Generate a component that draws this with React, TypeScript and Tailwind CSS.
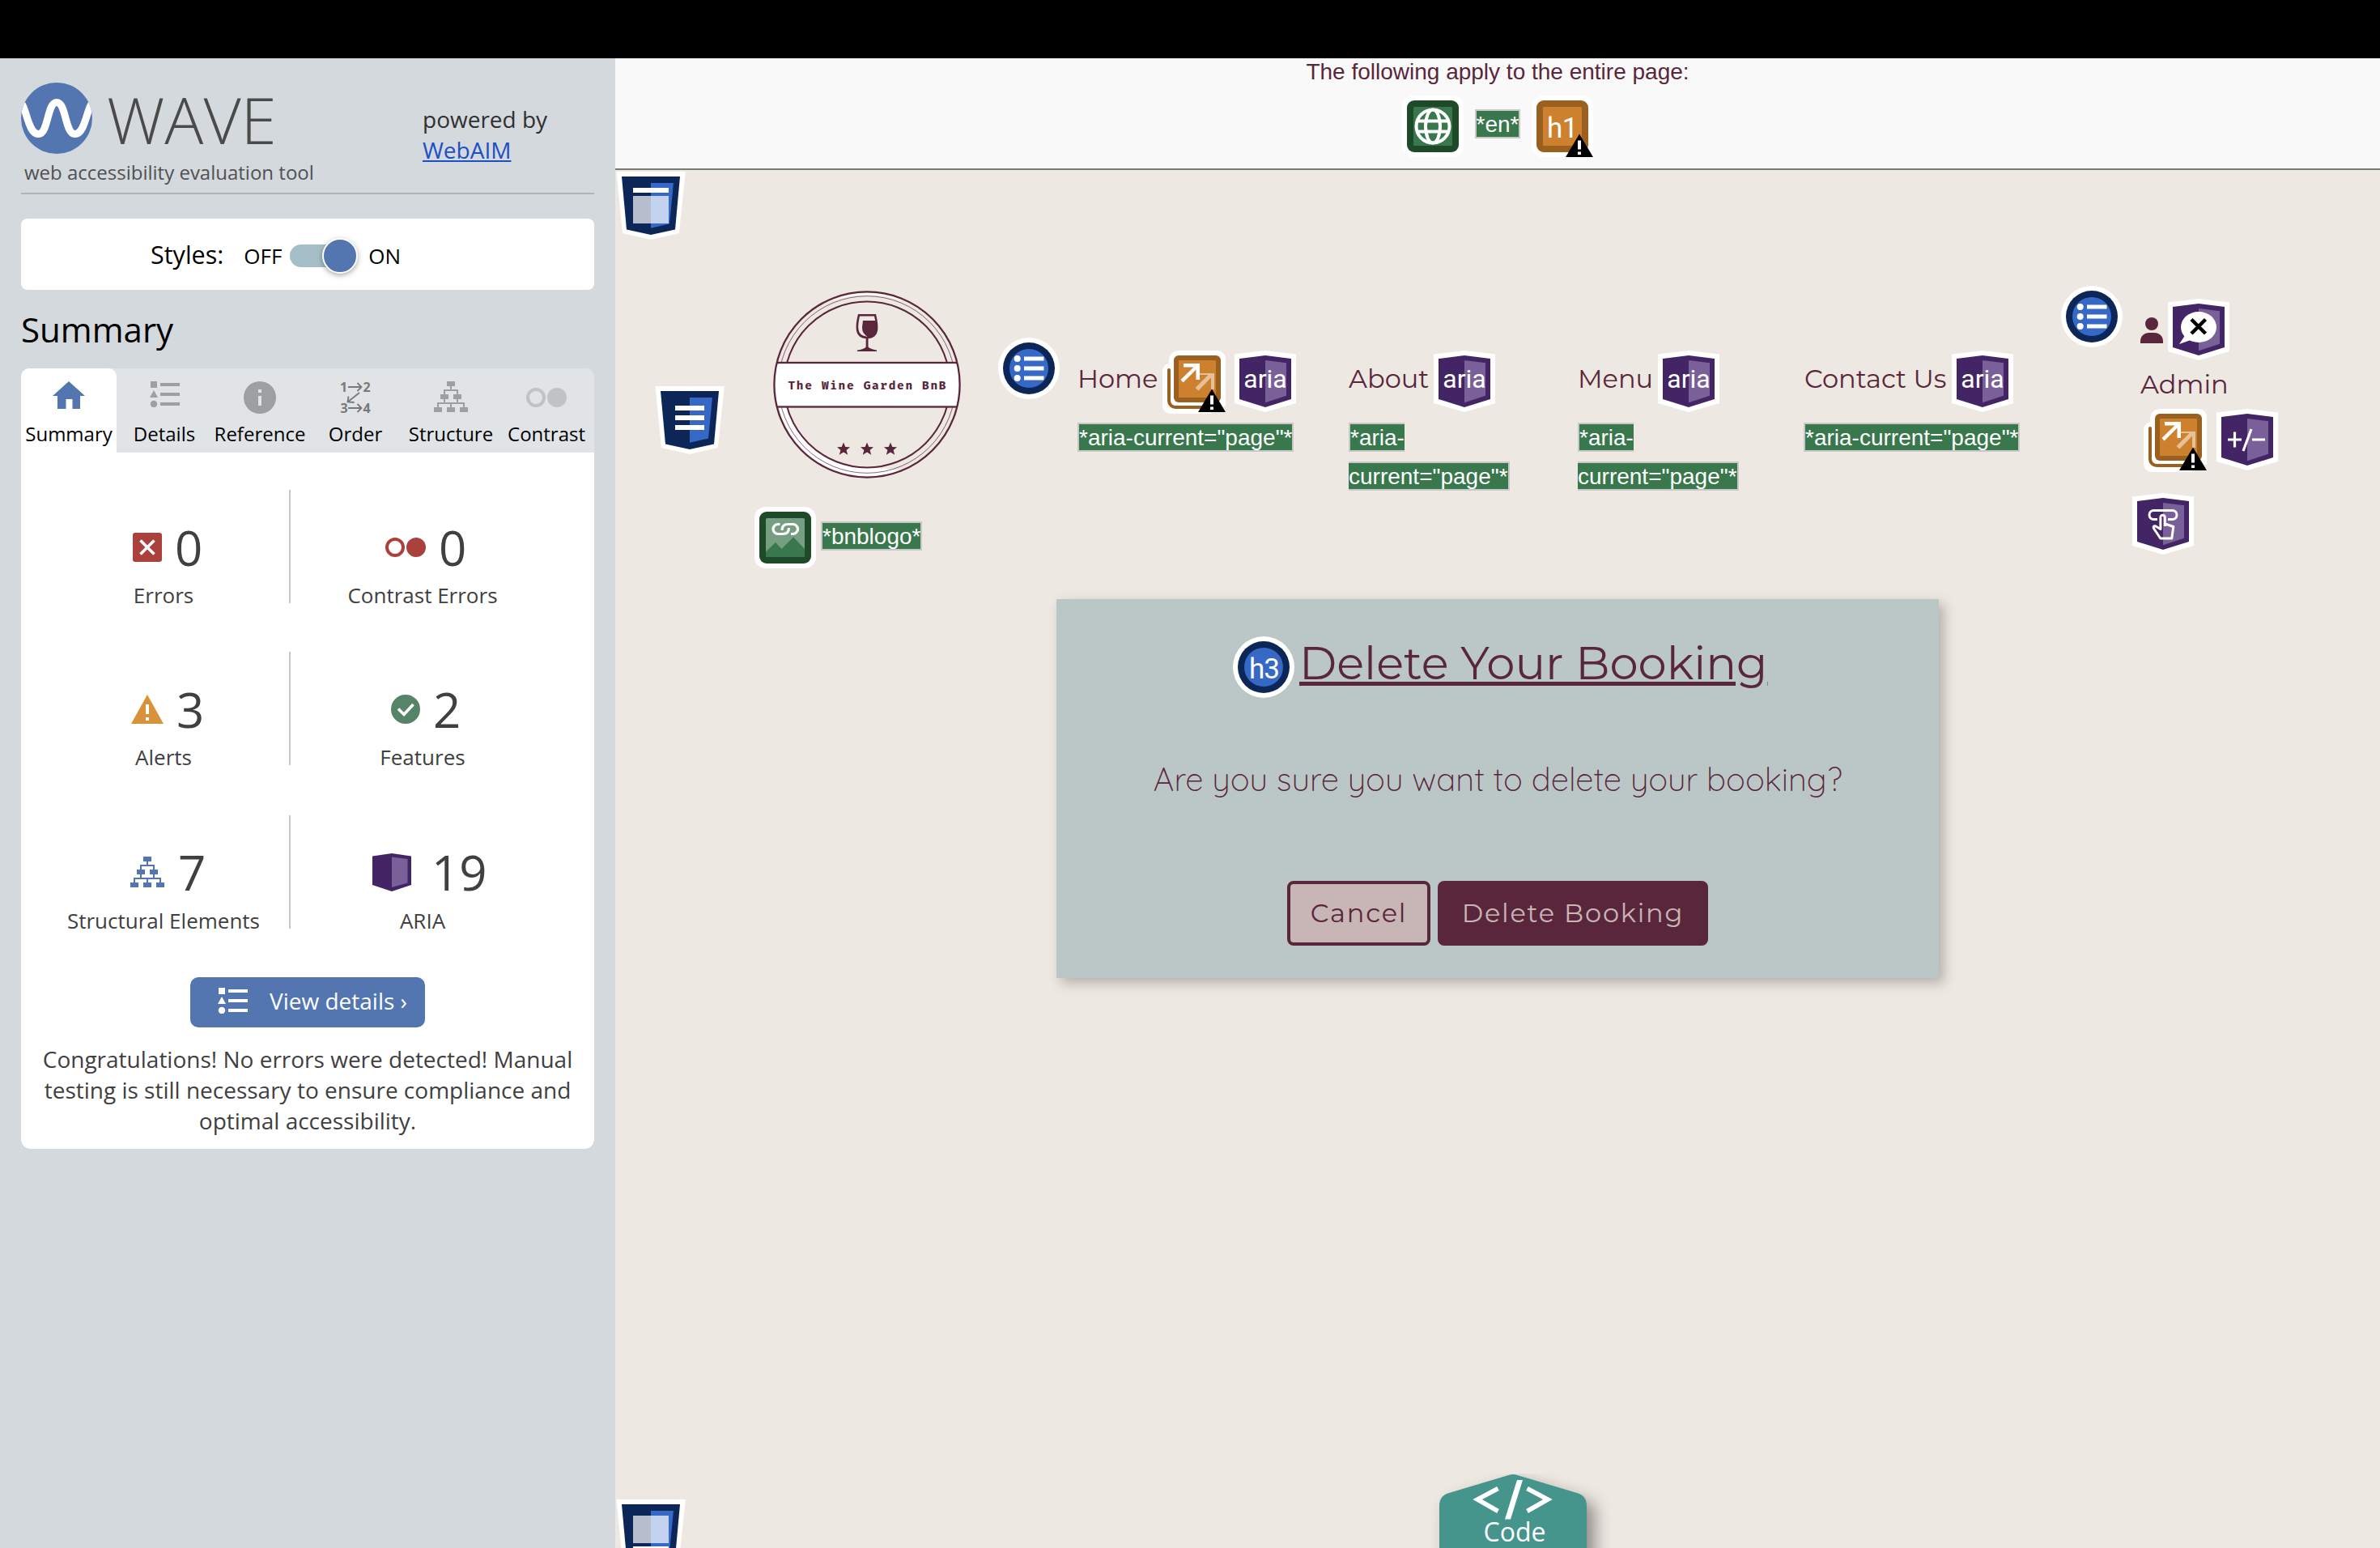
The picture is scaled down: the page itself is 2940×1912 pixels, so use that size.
import type { ReactNode } from 'react';

const WINE = '#59263c';

/* ---------- Sidebar icons ---------- */

function WaveLogo() {
  return (
    <svg width="88" height="88" viewBox="0 0 88 88">
      <defs>
        <clipPath id="wave-clip"><circle cx="44" cy="44" r="44" /></clipPath>
      </defs>
      <circle cx="44" cy="44" r="44" fill="#5376b0" />
      <g clipPath="url(#wave-clip)">
        <path d="M-3 24 C7 24 7 63.500 21.500 63.500 C34 63.500 32 24.500 44 24.500 C56 24.500 54 63.500 66.500 63.500 C81 63.500 81 24 91 24" fill="none" stroke="#fff" strokeWidth="9" />
      </g>
    </svg>
  );
}

function HomeIcon() {
  return (
    <svg width="40" height="34" viewBox="0 0 40 34">
      <path d="M20 0 40 18h-6v16h-9.500V22h-8v12H6V18H0z" fill="#5376b0" />
    </svg>
  );
}

function ListIcon({ color }: { color: string }) {
  return (
    <svg width="37" height="32" viewBox="0 0 37 32" fill={color}>
      <path d="M1 0h8v8H1zM5 11l5 9H0z" />
      <circle cx="5" cy="28" r="4.200" />
      <path d="M13 2h24v4H13zM13 14h24v4H13zM13 26h24v4H13z" />
    </svg>
  );
}

function InfoIcon() {
  return (
    <svg width="40" height="40" viewBox="0 0 40 40">
      <circle cx="20" cy="20" r="20" fill="#9d9fa1" />
      <path d="M18 10h4v4h-4zM18 18h4v12h-4z" fill="#e0e4e7" />
    </svg>
  );
}

function OrderIcon() {
  return (
    <svg width="46" height="46" viewBox="-5 -4 46 46" fill="none" stroke="#77797b" strokeWidth="1.800" className="overflow-visible">
      <path d="M9 6h16M20.500 1l5 5-5 5M9 32h16M20.500 27l5 5-5 5M23 13 8.500 24.500M9.500 17.500 8.500 24.500l8 .5" />
      <g className="font-['Open_Sans'] text-[16px] font-bold" fill="#77797b" stroke="none">
        <text x="-1" y="12">1</text>
        <text x="27.500" y="12">2</text>
        <text x="-0.500" y="38">3</text>
        <text x="27.500" y="38">4</text>
      </g>
    </svg>
  );
}

function TreeIcon({ color }: { color: string }) {
  return (
    <svg width="42" height="38" viewBox="0 0 42 38" fill={color}>
      <path d="M16 0h10v6H16zM8 16h10v6H8zM24 16h10v6H24zM0 32h10v6H0zM16 32h10v6H16zM32 32h10v6H32z" />
      <path d="M13 16v-5h16v5M21 6v5M5 32v-5h32v5M21 27v5M13 22v5M29 22v5" fill="none" stroke={color} strokeWidth="2" />
    </svg>
  );
}

function ContrastIcon({ color }: { color: string }) {
  return (
    <svg width="50" height="24" viewBox="0 0 50 24">
      <circle cx="12" cy="12" r="10" fill="none" stroke={color} strokeWidth="4" />
      <circle cx="38" cy="12" r="12" fill={color} />
    </svg>
  );
}

function ErrorIcon() {
  return (
    <svg width="36" height="36" viewBox="0 0 36 36">
      <rect width="36" height="36" rx="3" fill="#ab413d" />
      <path d="m9.500 9.500 17 17m0-17-17 17" stroke="#fff" strokeWidth="3.600" />
    </svg>
  );
}

function AlertIcon() {
  return (
    <svg width="40" height="36" viewBox="0 0 40 36">
      <path d="M20 0 40 36H0z" fill="#d8933a" />
      <path d="M18 12h4v12h-4zM18 28h4v4h-4z" fill="#fff" />
    </svg>
  );
}

function FeatureIcon() {
  return (
    <svg width="36" height="36" viewBox="0 0 36 36">
      <circle cx="18" cy="18" r="18" fill="#568468" />
      <path d="m9 17.500 7 7 11.500-12.500" fill="none" stroke="#fff" strokeWidth="3.600" />
    </svg>
  );
}

function AriaBookIcon() {
  return (
    <svg width="48" height="47" viewBox="0 0 48 47">
      <path d="M24 0 48 3.500V39L24 47 0 39V3.500z" fill="#432565" />
      <path d="M24 4.500 43.500 7v29.500L24 42z" fill="#7a6099" />
    </svg>
  );
}

/* ---------- Markers placed on the page ---------- */

function WarnCorner({ x, y }: { x: number; y: number }) {
  return (
    <g transform={`translate(${x} ${y})`}>
      <path d="M17 0 34 28.500H0z" fill="#000" />
      <path d="M15 8h4v11h-4zM15 22h4v3.500h-4z" fill="#fff" />
    </g>
  );
}

function SquareMarker({ dark, light, children }: { dark: string; light: string; children: ReactNode }) {
  return (
    <svg width="76" height="76" viewBox="0 0 76 76" className="shrink-0">
      <rect width="76" height="76" rx="14" fill="#fff" />
      <rect x="6" y="6" width="64" height="64" rx="9" fill={dark} />
      <rect x="14" y="14" width="48" height="48" rx="1.500" fill={light} />
      {children}
    </svg>
  );
}

function LanguageMarker() {
  return (
    <SquareMarker dark="#1f4a29" light="#39774c">
      <g fill="none" stroke="#fff" strokeWidth="4">
        <circle cx="38" cy="38" r="20.500" />
        <ellipse cx="38" cy="38" rx="9" ry="20.500" />
        <path d="M19 31.500h38M19 44.500h38" />
      </g>
    </SquareMarker>
  );
}

function MissingH1Marker() {
  return (
    <SquareMarker dark="#99601f" light="#cd802e">
      <text x="38" y="52" textAnchor="middle" className="font-['Roboto'] text-[35px] font-normal" letterSpacing="-0.500" fill="#fff">h1</text>
      <WarnCorner x={42} y={47.5} />
    </SquareMarker>
  );
}

function LinkedImageMarker() {
  return (
    <SquareMarker dark="#1f4a29" light="#759f80">
      <path d="M14 55.500 26 44l7.500 8L48 37.500l14 14.500v8.500a1.500 1.500 0 0 1-1.500 1.500h-45a1.500 1.500 0 0 1-1.500-1.500z" fill="#39774c" />
      <path d="M31.500 21.500H29a6 6 0 0 0 0 12h6c4.500 0 7.500-2.500 7.500-7.500M45 33.500h2.500a6 6 0 0 0 0-12h-6c-4.500 0-7.500 2.500-7.500 7.500" fill="none" stroke="#fff" strokeWidth="3.200" />
    </SquareMarker>
  );
}

function RoundMarker({ children }: { children: ReactNode }) {
  return (
    <svg width="76" height="76" viewBox="0 0 76 76" className="shrink-0">
      <circle cx="38" cy="38" r="38" fill="#fff" />
      <circle cx="38" cy="38" r="32" fill="#0c2657" />
      <circle cx="38" cy="38" r="24" fill="#3668c6" />
      {children}
    </svg>
  );
}

function UnorderedListMarker() {
  return (
    <RoundMarker>
      <g fill="#fff">
        <circle cx="23.700" cy="26" r="4" />
        <circle cx="23.700" cy="38" r="4" />
        <circle cx="23.700" cy="50" r="4" />
        <path d="M32 23.500h24.500v5H32zM32 35.500h24.500v5H32zM32 47.500h24.500v5H32z" />
      </g>
    </RoundMarker>
  );
}

function Heading3Marker() {
  return (
    <RoundMarker>
      <text x="38.500" y="52" textAnchor="middle" className="font-['Roboto'] text-[35px] font-normal" letterSpacing="-1" fill="#fff">h3</text>
    </RoundMarker>
  );
}

function HexMarker({ children }: { children?: ReactNode }) {
  return (
    <svg width="76" height="76" viewBox="0 0 76 76" className="shrink-0">
      <path d="M38 0 76 4.500V65L38 76 0 65V4.500z" fill="#fff" />
      <path d="M38 6 70 10v50L38 70 6 60V10z" fill="#432565" />
      <path d="M38 12 64 15.300v40.400L38 64.300z" fill="#7a6099" />
      {children}
    </svg>
  );
}

function AriaMarker() {
  return (
    <HexMarker>
      <text x="38" y="46" textAnchor="middle" className="font-['Roboto'] text-[32px] font-normal" fill="#fff">aria</text>
    </HexMarker>
  );
}

function HiddenMarker() {
  return (
    <HexMarker>
      <ellipse cx="38" cy="35" rx="22" ry="19" fill="#fff" />
      <path d="M22 44 14 56l17-6z" fill="#fff" />
      <path d="m29 25.500 17.500 17.500m0-17.500L29 43" stroke="#000" strokeWidth="4.500" />
    </HexMarker>
  );
}

function ExpandMarker() {
  return (
    <HexMarker>
      <path d="M14 38h17M22.500 28.500v19M44 38h16M43 25 33 52" stroke="#fff" strokeWidth="3.200" />
    </HexMarker>
  );
}

function TapMarker() {
  return (
    <HexMarker>
      <g fill="none" stroke="#fff" strokeWidth="3" strokeLinejoin="round">
        <path d="M31 32.500h-4.500a5.200 5.200 0 0 1 0-11h23a5.200 5.200 0 0 1 0 11H44" />
        <path d="M40.300 41V30a2.700 2.700 0 0 0-5.400 0v14.500l-6-3.500c-2-.8-3.300.3-2.500 2.500l8.400 12.500h14l2-14.500-10.500-3.500" />
      </g>
    </HexMarker>
  );
}

function PopupLinkMarker() {
  return (
    <svg width="78" height="78" viewBox="0 0 78 78" className="shrink-0">
      <path d="M20 0h48a10 10 0 0 1 10 10v58l-16 8a12 12 0 0 1-6 2H10A10 10 0 0 1 0 68V26a10 10 0 0 1 8-10v-4A12 12 0 0 1 20 0z" fill="#fff" />
      <path d="M8 24v38a8 8 0 0 0 8 8h44" fill="none" stroke="#99601f" strokeWidth="4" strokeLinecap="round" />
      <rect x="14" y="6" width="58" height="58" rx="6" fill="#99601f" />
      <rect x="20" y="12" width="46" height="46" rx="1" fill="#cd802e" />
      <path d="M42 30h22v20h-4V35.500L44.500 51.500 40.500 48 56.500 32H46z" fill="#fff" fillOpacity=".5" transform="translate(0 -2)" />
      <path d="M26 16h20v20h-4.500V23.500L25.500 39.500 22.500 36 38.500 20.500H26z" fill="#fff" />
      <WarnCorner x={44} y={47.5} />
    </svg>
  );
}

function ShieldMarker({ children }: { children: ReactNode }) {
  return (
    <svg width="86" height="84" viewBox="0 0 86 84" className="shrink-0">
      <path d="M.5 0h85.300l-8 76L43 84 8 76z" fill="#fff" />
      <path d="M7 6h72l-6 65.500L43 78l-30-6.500z" fill="#0c2657" />
      <path d="M43 14h28l-5 50.500L43 69.700z" fill="#3668c6" />
      {children}
    </svg>
  );
}

/* ---------- Page drawings ---------- */

const star = 'M0-8 2.300-2.600 8-2.300 3.600 1.400 5.200 7.200 0 4-5.200 7.200-3.600 1.400-8-2.300-2.300-2.600z';

function WineGardenLogo() {
  return (
    <svg width="232" height="232" viewBox="0 0 232 232">
      <defs>
        <clipPath id="badge-clip"><circle cx="116" cy="116" r="114.500" /></clipPath>
      </defs>
      <path d="M68 14 A112 112 0 0 1 164 14 A135 135 0 0 0 68 14z" fill="#fff" />
      <path d="M7 144 A112.500 112.500 0 0 0 116 229 Q140 229 156 222 Q140 219 116 219 A103 103 0 0 1 17 144z" fill="#fff" />
      <circle cx="116" cy="116" r="109.300" fill="none" stroke={WINE} strokeWidth=".7" />
      <circle cx="116" cy="116" r="102.500" fill="none" stroke={WINE} strokeWidth="2" />
      <g clipPath="url(#badge-clip)">
        <rect x="0" y="89" width="232" height="54.500" fill="#fff" stroke={WINE} strokeWidth="2.300" />
      </g>
      <circle cx="116" cy="116" r="114.600" fill="none" stroke={WINE} strokeWidth="2.300" />
      <text x="18.500" y="122" textLength="195" className="font-['Fira_Mono','DejaVu_Sans_Mono',monospace] text-[14.500px] font-bold" fill={WINE}>The Wine Garden BnB</text>
      <g transform="translate(102 29)">
        <path d="M4 1.300h20q2.500 10 2 17.200Q25 28.500 14 29 3 28.500 2 18.500 1.500 11.300 4 1.300z" fill="none" stroke={WINE} strokeWidth="2.600" />
        <path d="M9 8h15.500l1.500 10q0 10-10.500 10.500Q7.500 24 8 16z" fill={WINE} />
        <path d="M12.700 29h2.800v11.500q2 2.500 10.500 4v1.500H2v-1.500q8-1 10.700-4z" fill={WINE} />
      </g>
      <g fill={WINE}>
        <path d={star} transform="translate(87 195.500)" />
        <path d={star} transform="translate(116 195.500)" />
        <path d={star} transform="translate(145 195.500)" />
      </g>
    </svg>
  );
}

function PersonIcon() {
  return (
    <svg width="28" height="32" viewBox="0 0 28 32" fill={WINE}>
      <circle cx="14" cy="8" r="8" />
      <path d="M0 32v-2C0 23 4.500 19 11 19h6c6.500 0 11 4 11 11v2z" />
    </svg>
  );
}

function CodeTab() {
  return (
    <svg width="222" height="92" viewBox="0 0 222 92" className="overflow-hidden">
      <path d="M10 120V40Q10 27 22 24L94 2.500q7-3 14 0L180 24q12 3 12 16v80z" fill="#46958d" className="[filter:drop-shadow(10px_10px_10px_rgba(0,0,0,0.4))]" />
      <path d="M83 18 57.500 31.500 83 46M119 18l25.500 13.500L119 46" fill="none" stroke="#fff" strokeWidth="5.500" transform="translate(-0.500 0.500)" />
      <path d="M103 8h7L95 56.500h-7z" fill="#fff" transform="translate(3 0)" />
      <text x="103" y="84" textAnchor="middle" className="font-['Open_Sans'] text-[32px] font-normal" fill="#fff">Code</text>
    </svg>
  );
}

/* ---------- Sidebar ---------- */

function Tab({ label, active, children }: { label: string; active?: boolean; children: ReactNode }) {
  return (
    <div className={`flex flex-col items-center pt-4 ${active ? 'rounded-t-[10px] bg-white' : ''}`}>
      <div className="flex h-[40px] items-center justify-center">{children}</div>
      <span className="mt-[9px] text-[24px] leading-[32px] text-black">{label}</span>
    </div>
  );
}

function Stat({ icon, value, label, row, cell }: { icon: ReactNode; value: string; label: string; row: string; cell: string }) {
  return (
    <div className={`h-[140px] ${cell}`}>
      <div className={`flex h-[111px] items-center ${row}`}>
        <div className="flex w-[60px] justify-center">{icon}</div>
        <span className="text-[60px] leading-[80px]">{value}</span>
      </div>
      <div className="text-center text-[26px] leading-[39px] whitespace-nowrap">{label}</div>
    </div>
  );
}

function Sidebar() {
  return (
    <aside className="flex w-[760px] shrink-0 flex-col bg-[#d4d9dd] px-[26px] font-['Open_Sans'] text-[#3f4041]">
      <header className="flex h-[168px] border-b-2 border-[#aeb4b7] pt-[30px]">
        <div className="w-[496px]">
          <div className="flex gap-[18px]">
            <WaveLogo />
            <span className="pt-px text-[80px] leading-[88px] font-light text-[#4a4a4a]">WAVE</span>
          </div>
          <p className="mt-[6px] pl-[4px] text-[24px] leading-[32px] text-[#505152]">web accessibility evaluation tool</p>
        </div>
        <div className="pt-[26px] text-[28px] leading-[38px] text-[#2f3031]">
          <p>powered by</p>
          <a className="text-[#1d4fc4] underline">WebAIM</a>
        </div>
      </header>

      <section className="mt-[30px] flex h-[88px] items-center rounded-[8px] bg-white pt-[4px] pl-[160px] text-[26px] text-black">
        <span className="pb-[3px] text-[30.500px] leading-none">Styles:</span>
        <span className="ml-[25px] leading-none">OFF</span>
        <span className="ml-[10px] flex h-[28px] w-[72px] items-center rounded-full bg-[#a5bfc9] pl-[40px]">
          <span className="size-[44px] shrink-0 rounded-full border-2 border-white bg-[#5376b0] shadow-[0_2px_6px_rgba(0,0,0,0.35)]" />
        </span>
        <span className="ml-[25px] leading-none">ON</span>
      </section>

      <h2 className="mt-[21px] text-[42px] leading-[56px] text-black">Summary</h2>

      <nav className="mt-[20px] grid h-[104px] grid-cols-6 rounded-t-[10px] bg-[#e0e4e7]">
        <Tab label="Summary" active><div className="pb-[6px]"><HomeIcon /></div></Tab>
        <Tab label="Details"><div className="pb-[8px]"><ListIcon color="#9d9fa1" /></div></Tab>
        <Tab label="Reference"><InfoIcon /></Tab>
        <Tab label="Order"><OrderIcon /></Tab>
        <Tab label="Structure"><div className="pb-[2px]"><TreeIcon color="#9d9fa1" /></div></Tab>
        <Tab label="Contrast"><ContrastIcon color="#c0c2c4" /></Tab>
      </nav>

      <section className="flex h-[860px] flex-col items-center rounded-b-[12px] bg-white pt-[46px]">
        <div className="grid w-full grid-cols-[333px_326px] gap-y-[60px]">
          <Stat icon={<ErrorIcon />} value="0" label="Errors" cell="border-r-2 border-[#c9c9c9] pl-[21px]" row="gap-[4px] pt-[31px] pl-[105px]" />
          <Stat icon={<ContrastIcon color="#ab413d" />} value="0" label="Contrast Errors" cell="" row="gap-[11px] pt-[31px] pl-[112px]" />
          <Stat icon={<AlertIcon />} value="3" label="Alerts" cell="border-r-2 border-[#c9c9c9] pl-[21px]" row="gap-[6px] pt-[31px] pl-[105px]" />
          <Stat icon={<FeatureIcon />} value="2" label="Features" cell="" row="gap-[4px] pt-[31px] pl-[112px]" />
          <Stat icon={<TreeIcon color="#5376b0" />} value="7" label="Structural Elements" cell="mt-[2px] border-r-2 border-[#c9c9c9] pl-[21px]" row="gap-[8px] pt-[29px] pl-[105px]" />
          <Stat icon={<AriaBookIcon />} value="19" label="ARIA" cell="mt-[2px]" row="gap-[19px] pt-[29px] pl-[95px]" />
        </div>
        <button className="mt-[60px] flex h-[62px] w-[290px] shrink-0 items-center rounded-[10px] bg-[#5376b0] pb-[4px] pl-[34px] text-[28px] leading-[38px] text-white">
          <ListIcon color="#fff" />
          <span className="ml-[27px]">View details ›</span>
        </button>
        <p className="mt-5 w-[680px] text-center text-[28px] leading-[38px]">
          Congratulations! No errors were detected! Manual testing is still necessary to ensure compliance and optimal accessibility.
        </p>
      </section>
    </aside>
  );
}

/* ---------- Evaluated page ---------- */

const noteClass = "border-2 border-[#c8c8c8] bg-[#39774c] pt-px font-['Liberation_Sans'] text-[28px] leading-[31px] whitespace-nowrap text-white";

function Note({ children }: { children: ReactNode }) {
  return <span className={noteClass}>{children}</span>;
}

function NavItem({ label, labelClass, popup, wrapNote }: { label: string; labelClass: string; popup?: boolean; wrapNote?: boolean }) {
  return (
    <div className="flex flex-col items-start pt-[80px]">
      <div className="flex h-[89px] items-start">
        <span className={`pt-[15px] text-[32px] leading-[40px] whitespace-nowrap ${labelClass}`}>{label}</span>
        {popup && <div className="mr-[11px]"><PopupLinkMarker /></div>}
        <AriaMarker />
      </div>
      {wrapNote ? (
        <>
          <span className={`${noteClass} border-r-0`}>*aria-</span>
          <span className={`${noteClass} mt-[12px] border-l-0`}>current="page"*</span>
        </>
      ) : (
        <Note>*aria-current="page"*</Note>
      )}
    </div>
  );
}

function SiteHeader() {
  return (
    <div className="mt-[57px] grid h-[387px] grid-cols-[172px_301px_98px_335px_283px_279px_318px_88px_1fr] items-start">
      <div className="pt-[124px] pl-[49px]">
        <ShieldMarker>
          <path d="M25 24h36v6H25zM25 36h36v6H25zM25 48h36v6H25z" fill="#fff" />
        </ShieldMarker>
      </div>
      <div className="pt-[6px]">
        <div className="pl-[23px]"><WineGardenLogo /></div>
        <div className="mt-[35px] flex items-start gap-[6px]">
          <LinkedImageMarker />
          <div className="mt-[18px] flex"><Note>*bnblogo*</Note></div>
        </div>
      </div>
      <div className="pt-[64px]"><UnorderedListMarker /></div>
      <NavItem label="Home" labelClass="w-[105px]" popup />
      <NavItem label="About" labelClass="w-[105px]" wrapNote />
      <NavItem label="Menu" labelClass="w-[99px]" wrapNote />
      <NavItem label="Contact Us" labelClass="w-[183px] pl-px" />
      <div><UnorderedListMarker /></div>
      <div className="pt-[16px]">
        <div className="flex items-start gap-[6px] pl-[10px]">
          <div className="pt-[23px]"><PersonIcon /></div>
          <HiddenMarker />
        </div>
        <p className="mt-[10px] pl-[10px] text-[32px] leading-[40px]">Admin</p>
        <div className="mt-[10px] flex gap-[12px] pl-[14px]">
          <PopupLinkMarker />
          <ExpandMarker />
        </div>
        <div className="mt-[26px]"><TapMarker /></div>
      </div>
    </div>
  );
}

function DeleteCard() {
  return (
    <section className="mx-auto flex h-[468px] w-[1090px] flex-col bg-[#bbc7c6] pt-[46px] shadow-[6px_6px_14px_rgba(0,0,0,0.25)]">
      <div className="flex h-[76px] gap-[6px] pl-[218px]">
        <Heading3Marker />
        <h3 className="-mt-[5px] text-[56px] leading-[76px] whitespace-nowrap underline decoration-[5px] underline-offset-[3px]">Delete Your Booking</h3>
      </div>
      <p className="mt-[75px] text-center font-['Quicksand','Inter',sans-serif] text-[40px] leading-[50px] font-light">Are you sure you want to delete your booking?</p>
      <div className="mt-[101px] flex justify-center gap-[9px] text-[32px] font-[450] tracking-[1.800px]">
        <button className="h-[80px] w-[177px] rounded-[8px] border-4 border-[#59263c] bg-[#c7b6b5]">Cancel</button>
        <button className="h-[80px] w-[334px] rounded-[8px] bg-[#59263c] text-[#c7b6b5]">Delete Booking</button>
      </div>
    </section>
  );
}

function Page() {
  return (
    <main className="flex w-[2180px] flex-col bg-[#eee8e2] font-['Montserrat','Inter',sans-serif] text-[#59263c]">
      <div className="flex h-[138px] shrink-0 flex-col items-center border-b-2 border-[#757d71] bg-[#f9f9f9]">
        <p className="pt-px font-['Liberation_Sans'] text-[28px] leading-[31px]">The following apply to the entire page:</p>
        <div className="mt-[14px] flex items-start gap-[14px]">
          <LanguageMarker />
          <div className="mt-[17px] flex"><Note>*en*</Note></div>
          <MissingH1Marker />
        </div>
      </div>
      <div className="pt-[2px] pl-px">
        <ShieldMarker>
          <path d="M21 20h44v6H21z" fill="#fff" />
          <path d="M21 30h44v34H21z" fill="#fff" fillOpacity=".7" />
        </ShieldMarker>
      </div>
      <SiteHeader />
      <DeleteCard />
      <div className="mt-auto flex h-[92px] shrink-0 overflow-hidden pl-px">
        <div className="pt-[32px]">
          <ShieldMarker>
            <path d="M21 20h44v34H21z" fill="#fff" fillOpacity=".7" />
            <path d="M21 58h44v6H21z" fill="#fff" />
          </ShieldMarker>
        </div>
        <div className="ml-[921px]"><CodeTab /></div>
      </div>
    </main>
  );
}

export default function App() {
  return (
    <div className="flex h-[1912px] w-[2940px] flex-col overflow-hidden bg-black pt-[72px]">
      <div className="flex h-[1840px]">
        <Sidebar />
        <Page />
      </div>
    </div>
  );
}
